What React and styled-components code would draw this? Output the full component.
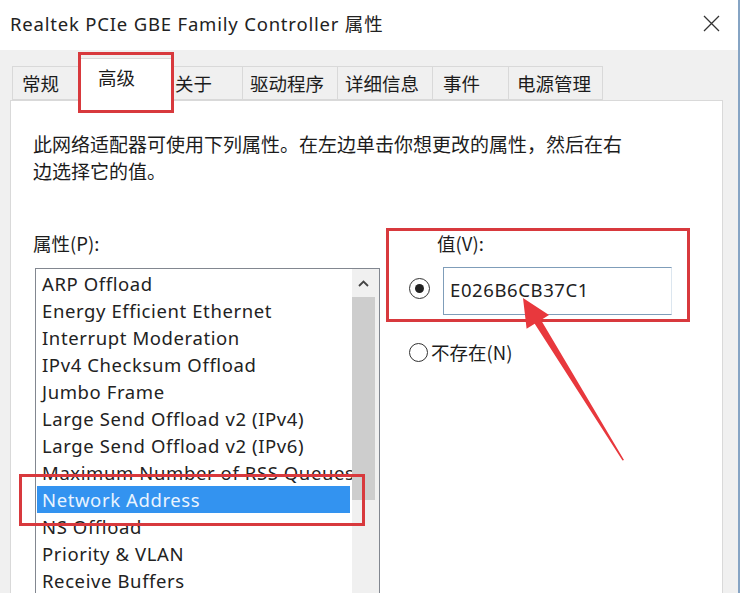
import React from 'react';
import styled, { createGlobalStyle } from 'styled-components';

const GlobalStyle = createGlobalStyle`
  html, body {
    margin: 0;
    padding: 0;
    background: #ffffff;
  }
  * {
    box-sizing: border-box;
  }
`;

const LATIN = `"Noto Sans", "Noto Sans CJK SC", sans-serif`;
const CJK = `"Noto Sans CJK SC", "Noto Sans", sans-serif`;

const Window = styled.div`
  position: relative;
  width: 740px;
  height: 593px;
  overflow: hidden;
  background: #f0f0f0;
  border-right: 2px solid #86a4c4;
  display: flex;
  flex-direction: column;
  font-family: ${CJK};
  color: #1c1c1c;
`;

const TitleBar = styled.div`
  height: 50px;
  flex-shrink: 0;
  background: #ffffff;
  display: flex;
  align-items: center;
  justify-content: space-between;
  padding: 0 18px 4px 10px;
`;

const Title = styled.div`
  font-family: ${LATIN};
  font-size: 18.5px;
  color: #222;
  letter-spacing: 0.8px;
`;

const Body = styled.div`
  flex: 1;
  display: flex;
  flex-direction: column;
  padding: 16px 15px 0 10px;
`;

const TabStrip = styled.div`
  display: flex;
  align-items: flex-end;
  height: 34px;
  padding-left: 2px;
  position: relative;
  z-index: 2;
`;

const Tab = styled.div`
  position: relative;
  width: ${({ w }) => w}px;
  height: ${({ active }) => (active ? 43 : 34)}px;
  margin-left: ${({ ml }) => ml}px;
  margin-right: ${({ active }) => (active ? -2 : 0)}px;
  margin-bottom: ${({ active }) => (active ? -1 : 0)}px;
  padding-left: ${({ pad }) => pad}px;
  padding-bottom: ${({ active }) => (active ? 6 : 0)}px;
  display: flex;
  align-items: center;
  background: ${({ active }) => (active ? '#ffffff' : '#f0f0f0')};
  border: 1px solid #d9d9d9;
  border-bottom: ${({ active }) => (active ? 'none' : '1px solid #d9d9d9')};
  font-size: 18.5px;
  white-space: nowrap;
  z-index: ${({ active }) => (active ? 1 : 0)};
`;

const Mark = styled.div`
  position: absolute;
  left: ${({ l }) => l}px;
  right: ${({ r }) => r}px;
  top: ${({ t }) => t}px;
  bottom: ${({ b }) => b}px;
  border: 3px solid #d8393d;
  pointer-events: none;
  z-index: 3;
`;

const Panel = styled.div`
  flex: 1;
  background: #ffffff;
  border: 1px solid #d9d9d9;
  padding: 29px 0 0 22px;
  position: relative;
  z-index: 1;
`;

const Description = styled.p`
  margin: 0;
  font-size: 19px;
  line-height: 27px;
  color: #1c1c1c;
`;

const Columns = styled.div`
  display: flex;
  align-items: flex-start;
  margin-top: 46px;
`;

const LeftColumn = styled.div`
  display: flex;
  flex-direction: column;
`;

const Label = styled.div`
  font-size: 18.5px;
  line-height: 27px;
`;

const ListBox = styled.div`
  position: relative;
  margin: 11px 0 0 2px;
  width: 345px;
  height: 340px;
  border: 1px solid #828790;
  background: #ffffff;
  display: flex;
`;

const Items = styled.div`
  flex: 1;
  min-width: 0;
  padding-top: 1px;
`;

const Item = styled.div`
  position: relative;
  height: 27px;
  line-height: 27px;
  padding-left: ${({ selected }) => (selected ? 5 : 6)}px;
  margin-left: ${({ selected }) => (selected ? 1 : 0)}px;
  margin-right: ${({ selected }) => (selected ? 2 : 0)}px;
  font-family: ${LATIN};
  font-size: 18.5px;
  letter-spacing: 0.6px;
  white-space: nowrap;
  overflow: ${({ selected }) => (selected ? 'visible' : 'hidden')};
  background: ${({ selected }) => (selected ? '#3393f0' : 'transparent')};
  color: ${({ selected }) => (selected ? '#e9f4ff' : '#222')};
`;

const ScrollBar = styled.div`
  width: 27px;
  flex-shrink: 0;
  background: #f0f0f0;
  display: flex;
  flex-direction: column;
  padding-right: 4px;
`;

const ScrollArrow = styled.div`
  height: 28px;
  display: flex;
  align-items: center;
  justify-content: center;
`;

const Thumb = styled.div`
  height: 203px;
  background: #cdcdcd;
`;

const RightColumn = styled.div`
  margin: -2px 0 0 6px;
  display: flex;
  flex-direction: column;
`;

const ValueGroup = styled.div`
  width: 304px;
  height: 94px;
  border: 3px solid #d8393d;
  display: grid;
  grid-template-columns: 22px 1fr;
  grid-template-rows: 24px 48px;
  column-gap: 12px;
  row-gap: 12px;
  padding: 0 15px 4px 20px;
`;

const ValueLabel = styled.div`
  grid-column: 2;
  margin-left: -6px;
  font-size: 18.5px;
  line-height: 24px;
`;

const Radio = styled.div`
  width: ${({ size }) => size}px;
  height: ${({ size }) => size}px;
  border-radius: 50%;
  border: 1.5px solid #333;
  background: #fff;
  display: flex;
  align-items: center;
  justify-content: center;
  align-self: center;
  flex-shrink: 0;
  margin-top: ${({ mt }) => mt || 0}px;

  &::after {
    content: '';
    display: ${({ checked }) => (checked ? 'block' : 'none')};
    width: 9px;
    height: 9px;
    border-radius: 50%;
    background: #222;
  }
`;

const Field = styled.div`
  height: 48px;
  border: 1px solid #7f9db9;
  border-right-color: #dce6ef;
  display: flex;
  align-items: center;
  padding: 0 0 4px 6px;
  font-family: ${LATIN};
  font-size: 18.5px;
  letter-spacing: 0.6px;
  color: #222;
`;

const OptionRow = styled.div`
  margin: 18px 0 0 23px;
  height: 24px;
  display: flex;
  align-items: center;
  gap: 3px;
  font-size: 18.5px;
`;

const Overlay = styled.svg`
  position: absolute;
  left: 0;
  top: 0;
  width: 740px;
  height: 593px;
  pointer-events: none;
  z-index: 5;
`;

const tabs = [
  { label: '常规', w: 69, ml: 0, pad: 9 },
  { label: '高级', w: 94, ml: -3, pad: 19, active: true },
  { label: '关于', w: 74, ml: -1, pad: 5 },
  { label: '驱动程序', w: 96, ml: -1, pad: 7 },
  { label: '详细信息', w: 96, ml: -1, pad: 7 },
  { label: '事件', w: 77, ml: -1, pad: 10 },
  { label: '电源管理', w: 95, ml: -1, pad: 8 },
];

const properties = [
  'ARP Offload',
  'Energy Efficient Ethernet',
  'Interrupt Moderation',
  'IPv4 Checksum Offload',
  'Jumbo Frame',
  'Large Send Offload v2 (IPv4)',
  'Large Send Offload v2 (IPv6)',
  'Maximum Number of RSS Queues',
  'Network Address',
  'NS Offload',
  'Priority & VLAN',
  'Receive Buffers',
];

const CloseIcon = () => (
  <svg width="17" height="17" viewBox="0 0 17 17">
    <path d="M1 1 L16 16 M16 1 L1 16" stroke="#333" strokeWidth="1.3" fill="none" />
  </svg>
);

const ChevronUp = () => (
  <svg width="11" height="7" viewBox="0 0 11 7">
    <path d="M1 6 L5.5 1.5 L10 6" stroke="#444" strokeWidth="1.8" fill="none" />
  </svg>
);

export default function App() {
  return (
    <>
      <GlobalStyle />
      <Window>
        <TitleBar>
          <Title>Realtek PCIe GBE Family Controller 属性</Title>
          <CloseIcon />
        </TitleBar>
        <Body>
          <TabStrip>
            {tabs.map((t) => (
              <Tab key={t.label} w={t.w} ml={t.ml} pad={t.pad} active={t.active}>
                {t.label}
                {t.active && <Mark l={-1} r={-3} t={-7} b={-12} />}
              </Tab>
            ))}
          </TabStrip>
          <Panel>
            <Description>
              此网络适配器可使用下列属性。在左边单击你想更改的属性，然后在右
              <br />
              边选择它的值。
            </Description>
            <Columns>
              <LeftColumn>
                <Label>属性(P):</Label>
                <ListBox>
                  <Items>
                    {properties.map((p) => (
                      <Item key={p} selected={p === 'Network Address'}>
                        {p}
                        {p === 'Network Address' && <Mark l={-18} r={-15} t={-12} b={-13} />}
                      </Item>
                    ))}
                  </Items>
                  <ScrollBar>
                    <ScrollArrow>
                      <ChevronUp />
                    </ScrollArrow>
                    <Thumb />
                  </ScrollBar>
                </ListBox>
              </LeftColumn>
              <RightColumn>
                <ValueGroup>
                  <ValueLabel>值(V):</ValueLabel>
                  <Radio size={21} checked mt={-6} />
                  <Field>E026B6CB37C1</Field>
                </ValueGroup>
                <OptionRow>
                  <Radio size={19} />
                  不存在(N)
                </OptionRow>
              </RightColumn>
            </Columns>
          </Panel>
        </Body>
        <Overlay viewBox="0 0 740 593">
          <polygon
            points="523,298 549,315 541,320 624,460 622.5,460.5 534.7,323.7 526.6,328.7"
            fill="#e8383d"
          />
        </Overlay>
      </Window>
    </>
  );
}
